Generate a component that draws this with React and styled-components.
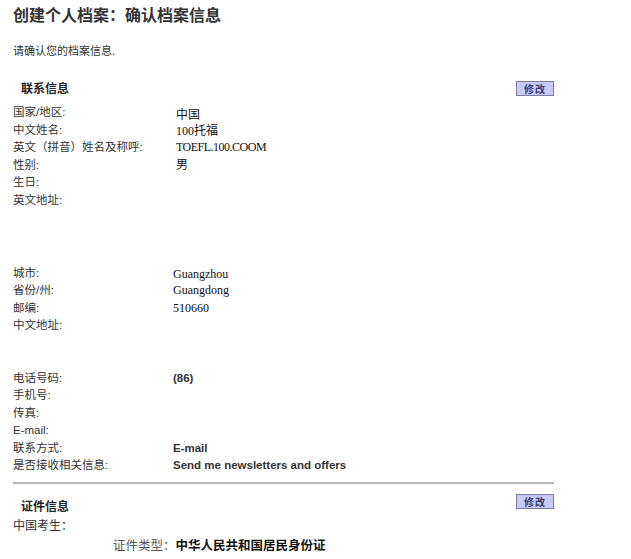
import React from "react";
import styled, { createGlobalStyle } from "styled-components";

const Global = createGlobalStyle`
  html, body { margin: 0; padding: 0; background: #fff; }
  body { font-family: "Liberation Sans", "Noto Sans CJK SC", sans-serif; color: #333; }
`;

const Page = styled.div`
  width: 631px;
  height: 559px;
  overflow: hidden;
  box-sizing: border-box;
  padding: 4px 0 0 13px;
  display: flex;
  flex-direction: column;
`;

const Title = styled.h1`
  margin: 0;
  font-size: 16px;
  line-height: 20px;
  font-weight: bold;
  color: #333;
  font-family: "Noto Sans CJK SC", sans-serif;
`;

const Intro = styled.p`
  margin: 18px 0 0;
  font-size: 11px;
  line-height: 16px;
  color: #333;
  font-family: "Noto Sans CJK SC", sans-serif;
`;

const SectionHead = styled.div`
  width: 541px;
  display: flex;
  align-items: center;
  justify-content: space-between;
  height: 16px;
  margin-top: ${(p) => p.$top}px;
`;

const SectionTitle = styled.h2`
  margin: 0 0 0 8px;
  font-size: 12px;
  line-height: 16px;
  padding-top: ${(p) => p.$pt || 0}px;
  font-weight: bold;
  color: #222;
  font-family: "Noto Sans CJK SC", sans-serif;
`;

const EditButton = styled.button`
  box-sizing: border-box;
  width: 38px;
  height: 15px;
  padding: 0;
  border: 1px solid #7c7c9c;
  background: #c9c9fb;
  color: #3a3a72;
  font-size: 10px;
  line-height: 13px;
  font-weight: bold;
  font-family: "Noto Sans CJK SC", sans-serif;
  letter-spacing: 1px;
  cursor: pointer;
`;

const Fields = styled.div`
  margin-top: 8px;
  display: grid;
  grid-template-columns: 160px 1fr;
  width: 541px;
`;

const Label = styled.div`
  font-size: 11.5px;
  line-height: 17.5px;
  height: ${(p) => p.$h || 17.5}px;
  color: #333;
  font-family: "Liberation Sans", "Noto Sans CJK SC", sans-serif;
  white-space: nowrap;
`;

const Value = styled.div`
  height: ${(p) => p.$h || 17.5}px;
  line-height: 17.5px;
  padding-top: ${(p) => p.$shift || 0}px;
  padding-left: ${(p) => p.$indent || 0}px;
  box-sizing: border-box;
  color: #111;
  white-space: nowrap;
  font-size: ${(p) => (p.$kind === "bold" ? "11.5px" : "12px")};
  letter-spacing: ${(p) => (p.$kind === "code" ? "-0.5px" : "normal")};
  font-weight: ${(p) => (p.$kind === "bold" ? "bold" : "normal")};
  font-family: ${(p) =>
    p.$kind === "bold"
      ? `"Liberation Sans", "Noto Sans CJK SC", sans-serif`
      : `"Liberation Serif", "Noto Sans CJK SC", serif`};
  ${(p) => (p.$kind === "bold" ? "color: #333;" : "")}
`;

const Divider = styled.hr`
  width: 541px;
  margin: 7px 0 0;
  border: 0;
  height: 2px;
  background: #b4b4b4;
`;

const PlainLine = styled.div`
  font-size: 12px;
  line-height: 18px;
  color: #333;
  font-family: "Noto Sans CJK SC", sans-serif;
  margin-top: 6px;
`;

const IdLine = styled.div`
  margin: 1px 0 0 100px;
  font-size: 12.5px;
  line-height: 20px;
  color: #555;
  font-family: "Noto Sans CJK SC", sans-serif;
  white-space: nowrap;
`;

const IdValue = styled.span`
  font-weight: bold;
  color: #111;
`;

const contact = [
  { label: "国家/地区:", value: "中国", shift: 2.5, indent: 3 },
  { label: "中文姓名:", value: "100托福", shift: 1.5, indent: 3 },
  { label: "英文（拼音）姓名及称呼:", value: "TOEFL.100.COOM", kind: "code", indent: 3 },
  { label: "性别:", value: "男", indent: 3 },
  { label: "生日:", value: "" },
  { label: "英文地址:", value: "", h: 73 },
  { label: "城市:", value: "Guangzhou", shift: 1 },
  { label: "省份/州:", value: "Guangdong" },
  { label: "邮编:", value: "510660", shift: -1 },
  { label: "中文地址:", value: "", h: 52.5 },
  { label: "电话号码:", value: "(86)", kind: "bold" },
  { label: "手机号:", value: "" },
  { label: "传真:", value: "" },
  { label: "E-mail:", value: "" },
  { label: "联系方式:", value: "E-mail", kind: "bold" },
  { label: "是否接收相关信息:", value: "Send me newsletters and offers", kind: "bold" },
];

export default function App() {
  return (
    <>
      <Global />
      <Page>
        <Title>创建个人档案：确认档案信息</Title>
        <Intro>请确认您的档案信息.</Intro>

        <SectionHead $top={22}>
          <SectionTitle>联系信息</SectionTitle>
          <EditButton>修改</EditButton>
        </SectionHead>

        <Fields>
          {contact.map((r) => (
            <React.Fragment key={r.label}>
              <Label $h={r.h}>{r.label}</Label>
              <Value $h={r.h} $kind={r.kind} $shift={r.shift} $indent={r.indent}>
                {r.value}
              </Value>
            </React.Fragment>
          ))}
        </Fields>

        <Divider />

        <SectionHead $top={10}>
          <SectionTitle $pt={8}>证件信息</SectionTitle>
          <EditButton>修改</EditButton>
        </SectionHead>
        <PlainLine>中国考生：</PlainLine>
        <IdLine>
          证件类型：<IdValue>中华人民共和国居民身份证</IdValue>
        </IdLine>
      </Page>
    </>
  );
}
